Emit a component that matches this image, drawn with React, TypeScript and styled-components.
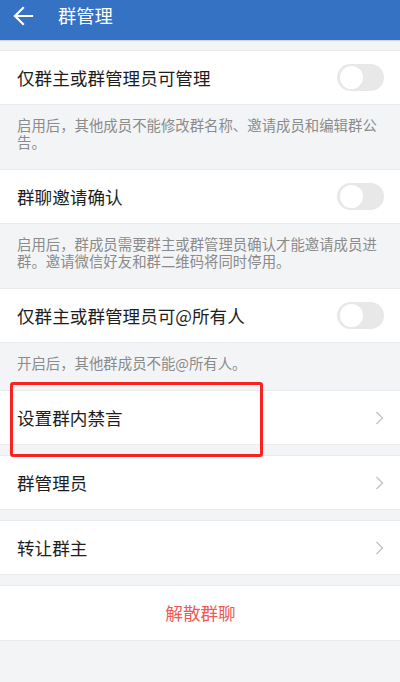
import React from 'react'
import styled, { createGlobalStyle } from 'styled-components'

const GlobalStyle = createGlobalStyle`
  html, body {
    margin: 0;
    padding: 0;
    background: #f3f4f6;
  }
  body {
    font-family: 'Noto Sans CJK SC', 'Noto Sans', 'Liberation Sans', sans-serif;
  }
`

const Page = styled.div`
  position: relative;
  width: 400px;
  min-height: 682px;
  background: #f3f4f6;
  display: flex;
  flex-direction: column;
`

const Header = styled.div`
  height: 40px;
  background: #3672c3;
  box-shadow: 0 1px 1px rgba(0, 0, 0, 0.12);
  display: flex;
  align-items: flex-start;
  padding-left: 12px;
  box-sizing: border-box;
  color: #fff;
`

const HeaderInner = styled.div`
  height: 31px;
  display: flex;
  align-items: center;
  gap: 24px;
`

const BackIcon = styled.svg`
  width: 22px;
  height: 22px;
  display: block;
`

const Title = styled.div`
  font-size: 18.3px;
  line-height: 1;
  letter-spacing: 0;
`

const List = styled.div`
  margin-top: 10px;
  display: flex;
  flex-direction: column;
`

const Row = styled.div<{ $center?: boolean; $tall?: boolean }>`
  height: ${p => (p.$tall ? 56 : 55)}px;
  box-sizing: border-box;
  background: #fff;
  border-top: 1px solid #eaebed;
  border-bottom: 1px solid #eaebed;
  display: flex;
  align-items: center;
  justify-content: ${p => (p.$center ? 'center' : 'space-between')};
  padding: 0 16px 0 17px;
`

const Label = styled.div<{ $danger?: boolean }>`
  font-size: 17.6px;
  color: ${p => (p.$danger ? '#ee5a55' : '#1e1e1e')};
  line-height: 1;
`

const Desc = styled.div`
  padding: 11px 17px 19px;
  font-size: 14.4px;
  line-height: 17px;
  color: #8b8b8b;
`

const Gap = styled.div`
  height: 10px;
`

const Switch = styled.div`
  width: 47px;
  height: 27px;
  border-radius: 14px;
  background: #e8e8e9;
  position: relative;
  margin-right: 0;
`

const Knob = styled.div`
  position: absolute;
  top: 2px;
  left: 3px;
  width: 23px;
  height: 23px;
  border-radius: 50%;
  background: #fff;
`

const Chevron = styled.svg`
  width: 9px;
  height: 14px;
  display: block;
  margin-right: 0;
`

const Highlight = styled.div`
  position: absolute;
  left: 10px;
  top: 382px;
  width: 253px;
  height: 75px;
  box-sizing: border-box;
  border: 3px solid #fb2222;
  border-radius: 3px;
  pointer-events: none;
`

function Toggle() {
  return (
    <Switch>
      <Knob />
    </Switch>
  )
}

function Arrow() {
  return (
    <Chevron viewBox="0 0 9 14">
      <path d="M1.5 1 L7.5 7 L1.5 13" fill="none" stroke="#c3c3c5" strokeWidth="1.4" />
    </Chevron>
  )
}

const switchItems = [
  {
    label: '仅群主或群管理员可管理',
    desc: '启用后，其他成员不能修改群名称、邀请成员和编辑群公告。'
  },
  {
    label: '群聊邀请确认',
    desc: '启用后，群成员需要群主或群管理员确认才能邀请成员进群。邀请微信好友和群二维码将同时停用。'
  },
  {
    label: '仅群主或群管理员可@所有人',
    desc: '开启后，其他群成员不能@所有人。'
  }
]

const linkItems = ['设置群内禁言', '群管理员', '转让群主']

export default function App() {
  return (
    <Page>
      <GlobalStyle />
      <Header>
        <HeaderInner>
          <BackIcon viewBox="0 0 22 22">
            <path
              d="M3 11 H20 M11 3 L3 11 L11 19"
              fill="none"
              stroke="#fff"
              strokeWidth="2.2"
              strokeLinecap="square"
            />
          </BackIcon>
          <Title>群管理</Title>
        </HeaderInner>
      </Header>
      <List>
        {switchItems.map(item => (
          <React.Fragment key={item.label}>
            <Row>
              <Label>{item.label}</Label>
              <Toggle />
            </Row>
            <Desc>{item.desc}</Desc>
          </React.Fragment>
        ))}
        {linkItems.map(label => (
          <React.Fragment key={label}>
            <Row>
              <Label>{label}</Label>
              <Arrow />
            </Row>
            <Gap />
          </React.Fragment>
        ))}
        <Row $center $tall>
          <Label $danger>解散群聊</Label>
        </Row>
      </List>
      <Highlight />
    </Page>
  )
}
